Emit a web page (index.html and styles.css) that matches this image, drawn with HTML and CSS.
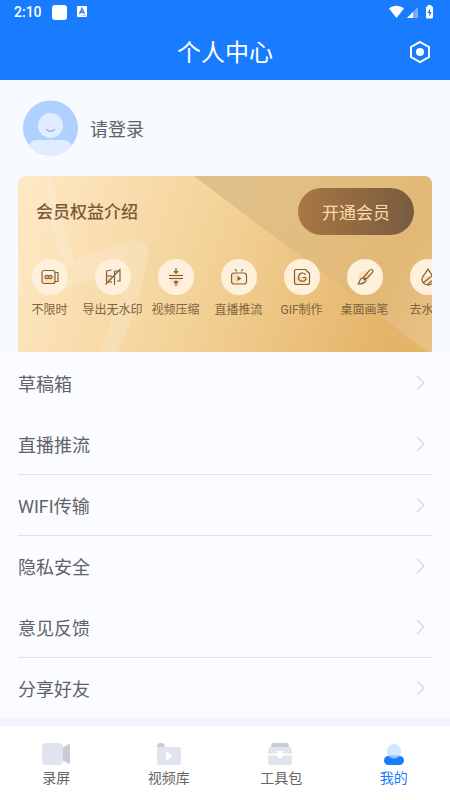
FILE: index.html
```html
<!DOCTYPE html>
<html lang="zh-CN">
<head>
<meta charset="utf-8">
<meta name="viewport" content="width=device-width, initial-scale=1">
<title>个人中心</title>
<link rel="stylesheet" href="styles.css">
</head>
<body>
<div class="app">
  <header class="header">
    <div class="status">
      <span class="time">2:10</span>
      <span class="status-square"></span>
      <svg class="status-app" width="10" height="12" viewBox="0 0 10 12"><rect width="10" height="11" rx="1" fill="#fff"/><path d="M2.500 8 5 2.500 7.500 8M3.400 6.200h3.200" fill="none" stroke="#3a7fe8" stroke-width="1.400"/><path d="M5 9.500h4" stroke="#a9c9fb"/></svg>
      <svg class="status-icons" width="48" height="16" viewBox="0 0 48 16">
        <path d="M1 4.500C5.500.700 11.500.700 16 4.500L8.500 14z" fill="#fff"/>
        <path d="M30 3v11H19z" fill="#75b0ff"/><path d="M25 8v6h-6z" fill="#fff"/>
        <path d="M40 1.500h3V3h1.500v11h-6V3H40z" fill="#fff" stroke="#fff" stroke-linejoin="round"/>
        <path d="M42 4.500 39.500 9h1.700v3.500L43.800 8H42z" fill="#197cff"/>
      </svg>
    </div>
    <div class="titlebar">
      <h1>个人中心</h1>
      <button class="settings" aria-label="设置"><svg width="22" height="24" viewBox="0 0 22 24"><path d="m11 2 9 5v10l-9 5-9-5V7z" fill="none" stroke="#fff" stroke-width="2"/><circle cx="11" cy="12" r="4" fill="#fff"/></svg></button>
    </div>
  </header>
  <main>
    <a class="profile" href="#login">
      <svg class="avatar" width="56" height="56" viewBox="0 0 56 56"><defs><clipPath id="face"><circle cx="28.500" cy="28" r="27.500"/></clipPath></defs><g clip-path="url(#face)"><rect width="56" height="56" fill="#b0d1ff"/><rect x="5" y="40" width="46" height="28" rx="10" fill="#e0ecff"/></g><circle cx="28.500" cy="25.500" r="12.500" fill="#e0ecff"/><path d="M24.500 29.500q4 3.500 8 0" fill="none" stroke="#8ab2f8" stroke-width="1.300" stroke-linecap="round"/></svg>
      <span>请登录</span>
    </a>
    <section class="vip">
      <svg class="vip-art" viewBox="0 0 414 176" preserveAspectRatio="none" aria-hidden="true">
        <defs>
          <linearGradient id="gold" gradientUnits="userSpaceOnUse" x1="0" y1="30" x2="370" y2="160"><stop stop-color="#fee8c4"/><stop offset=".5" stop-color="#f3d297"/><stop offset="1" stop-color="#e4b468"/></linearGradient>
          <linearGradient id="shade" gradientUnits="userSpaceOnUse" x1="190" y1="0" x2="414" y2="150"><stop stop-color="#dfc08c"/><stop offset=".5" stop-color="#e2bc7e"/><stop offset=".75" stop-color="#e2b876"/><stop offset="1" stop-color="#e8c084"/></linearGradient>
        </defs>
        <path d="M0 0h414v176H0z" fill="url(#gold)"/>
        <path d="M176 0h238v176h-4z" fill="url(#shade)"/>
        <path d="M28 3 33 50 47 98 57 87 42 38 36 7zM0 74v42l6 3zM57 87 60 81 115 64Q131 64 130 80L121 125 100 176H81L101 124 111 91 46 113z" fill="#fff" opacity=".17"/>
      </svg>
      <div class="vip-head"><h2>会员权益介绍</h2><button class="join">开通会员</button></div>
      <ul class="benefits">
        <li><span class="disc"><svg viewBox="0 0 18 18"><path class="tint" d="M2 8h12v7H3z"/><rect x="1" y="2.500" width="13" height="13" rx="2"/><path d="M14 4.500h3v9h-3"/><circle cx="5.700" cy="9" r="1.700"/><circle cx="9.300" cy="9" r="1.700"/></svg></span>不限时</li>
        <li><span class="disc"><svg viewBox="0 0 18 18"><path class="tint" d="M3 7h5v8H3z"/><path d="M7.500 2 2.500 3v11h5.500M2.500 8H8M10.500 3v14M10.500 3h5.500v10h-3M1.500 16.500 16.500 1"/></svg></span>导出无水印</li>
        <li><span class="disc"><svg viewBox="0 0 18 18"><circle class="tint" cx="9" cy="10" r="6"/><path d="M2 7.500h14M2 10.500h14M9 0v5M7 3l2 2 2-2M9 18v-5M7 15l2-2 2 2"/></svg></span>视频压缩</li>
        <li><span class="disc"><svg viewBox="0 0 18 18"><path class="tint" d="M2 6h7v9H2z"/><rect x="1.500" y="5" width="15" height="11" rx="2.500"/><path d="m5 1 2 2.500M13 1l-2 2.500"/><path class="solid" d="M7.500 8v5l4-2.500z"/></svg></span>直播推流</li>
        <li><span class="disc"><svg viewBox="0 0 18 18"><path class="tint" d="M2 9h12v7H2z"/><path d="M3.500 1.500h9l4 4v9q0 2-2 2h-11q-2 0-2-2v-11q0-2 2-2z"/><path d="M12.500 6.800C11 4 5.500 4.300 5.500 9.200c0 5 6 5 7.300 2V9.500H9.500"/></svg></span>GIF制作</li>
        <li><span class="disc"><svg viewBox="0 0 18 18"><circle class="tint" cx="8" cy="9" r="6"/><path d="M7 10 13 3c1-2 4-2 4 0 0 1-1 2-2 3l-6 6M2 16c2-1 1-5 4-6 3-1 5 2 3 4s-4 2-7 2zM7 10l2 2"/></svg></span>桌面画笔</li>
        <li><span class="disc"><svg viewBox="0 0 18 18"><path class="tint" d="M5 8h7v7H5z"/><path d="M9 1C7 5 3 8 3 11.500a6 5.500 0 0 0 12 0C15 8 11 5 9 1zM4 15 14 7M8 17l7-6"/></svg></span>去水印</li>
      </ul>
    </section>
    <nav class="menu" aria-label="功能">
      <a class="faint" href="#draft">草稿箱<svg width="12" height="18" viewBox="0 0 12 18"><path d="m2 2 7 7-7 7"/></svg></a>
      <a class="faint" href="#live">直播推流<svg width="12" height="18" viewBox="0 0 12 18"><path d="m2 2 7 7-7 7"/></svg></a>
      <a href="#wifi">WIFI传输<svg width="12" height="18" viewBox="0 0 12 18"><path d="m2 2 7 7-7 7"/></svg></a>
      <a href="#privacy">隐私安全<svg width="12" height="18" viewBox="0 0 12 18"><path d="m2 2 7 7-7 7"/></svg></a>
      <a class="faint" href="#feedback">意见反馈<svg width="12" height="18" viewBox="0 0 12 18"><path d="m2 2 7 7-7 7"/></svg></a>
      <a href="#share">分享好友<svg width="12" height="18" viewBox="0 0 12 18"><path d="m2 2 7 7-7 7"/></svg></a>
    </nav>
  </main>
  <nav class="tabs" aria-label="主导航">
    <a href="#record"><svg width="30" height="24" viewBox="0 0 30 24"><path d="m21 6 7-4q1 0 1 1v18q0 1-1 1l-7-4z" fill="#c8cbd3"/><rect x="1" y="1" width="21" height="22" rx="4" fill="#e0e4ef"/></svg>录屏</a>
    <a href="#videos"><svg width="30" height="24" viewBox="0 0 30 24"><path d="M3 8V5q0-4 4-4t4 4v3z" fill="#c8cbd3"/><path d="M3 5h22q2 0 2 2v14q0 2-2 2H5q-2 0-2-2z" fill="#e0e4ef"/><path d="M13 11v6l4-3z" fill="#fff" stroke="#fff" stroke-width="2" stroke-linejoin="round"/></svg>视频库</a>
    <a href="#tools"><svg width="30" height="24" viewBox="0 0 30 24"><path d="M5 5q0-4 3-4h12q3 0 3 4z" fill="#c8cbd3"/><rect x="2" y="5" width="24" height="18" rx="3" fill="#e0e4ef"/><path d="M2 12.500h24" stroke="#fff" stroke-width="2"/><rect x="11.500" y="9" width="5" height="7" rx="1" fill="#fff"/></svg>工具包</a>
    <a class="active" href="#me" aria-current="page"><svg width="30" height="24" viewBox="0 0 30 24"><rect x="5" y="14" width="20" height="9" rx="4.500" fill="#197cff"/><circle cx="15" cy="9" r="7" fill="#d3e6ff"/><path d="M9.300 13.500h11.400Q19 16.500 15 16.500t-5.700-3z" fill="#8dc0fb"/></svg>我的</a>
  </nav>
</div>
</body>
</html>
```
FILE: styles.css
```css
* { box-sizing: border-box; }
body {
  margin: 0;
  background: #f7faff;
  color: #606269;
  font-family: Roboto, "Noto Sans CJK SC", sans-serif;
}
a { color: inherit; text-decoration: none; }
button { padding: 0; border: 0; font: inherit; cursor: pointer; }
svg { display: block; flex: none; }
h1, h2 { margin: 0; }
.app { display: flex; flex-direction: column; min-height: 100vh; }
main { flex: 1; }

.header { background: #197cff; color: #fff; }
.status {
  display: flex;
  align-items: center;
  height: 24px;
  padding: 0 14px;
}
.time { font-size: 14px; font-weight: 500; }
.status-square { width: 15px; height: 15px; margin: 0 10px; border-radius: 3px; background: #fff; }
.status-icons { margin-left: auto; }
.titlebar {
  display: grid;
  grid-template-columns: 24px 1fr 24px;
  align-items: center;
  height: 56px;
  padding: 0 18px;
}
.titlebar h1 { grid-column: 2; padding-top: 2px; font-size: 24px; font-weight: 400; line-height: 32px; text-align: center; }
.settings { display: flex; justify-content: center; background: none; }

.profile {
  display: flex;
  align-items: center;
  gap: 12px;
  height: 96px;
  padding: 0 22px;
  font-size: 18px;
}

.vip {
  position: relative;
  height: 176px;
  margin: 0 18px;
  overflow: hidden;
  border-radius: 8px 8px 0 0;
  color: #795b3c;
}
.vip-art { position: absolute; inset: 0; width: 100%; height: 100%; }
.vip-head {
  position: relative;
  display: flex;
  align-items: center;
  justify-content: space-between;
  padding: 12px 18px;
}
.vip-head h2 { font-size: 17px; font-weight: 500; line-height: 24px; }
.join {
  width: 116px;
  height: 47px;
  border-radius: 24px;
  background: linear-gradient(90deg, #aa7843, #775b40);
  color: #fbdca9;
  font-size: 17px;
}
.benefits {
  position: relative;
  display: flex;
  margin: 0;
  padding: 12px 0 0;
  list-style: none;
}
.benefits li {
  display: flex;
  flex: none;
  flex-direction: column;
  align-items: center;
  gap: 5px;
  width: 63px;
  color: #80633f;
  font-size: 12px;
  line-height: 20px;
  white-space: nowrap;
}
.disc {
  display: grid;
  place-items: center;
  width: 36px;
  height: 36px;
  border-radius: 50%;
  background: #fff0dc;
}
.disc svg { width: 18px; height: 18px; fill: none; stroke: #80613f; stroke-width: 1.2; stroke-linejoin: round; }
.disc .tint { fill: #ffdfb5; stroke: none; }
.disc .solid { fill: #80613f; stroke: none; }

.menu { padding: 0 18px; background: #fbfcff; }
.menu a {
  display: flex;
  align-items: center;
  justify-content: space-between;
  height: 61px;
  padding-right: 5px;
  border-top: 1px solid #dfe2e9;
  font-size: 18px;
}
.menu .faint { border-color: #f5f7fb; }
.menu svg { fill: none; stroke: #d2d5dc; stroke-width: 1.2; }

.tabs {
  display: grid;
  grid-template-columns: repeat(4, 1fr);
  margin-top: 8px;
  padding: 16px 0 12px;
  background: #fff;
  box-shadow: 0 -8px #f1f5fb;
  color: #666;
}
.tabs a {
  display: flex;
  flex-direction: column;
  align-items: center;
  gap: 2px;
  font-size: 14px;
  line-height: 20px;
}
.tabs .active { color: #197cff; }
```
